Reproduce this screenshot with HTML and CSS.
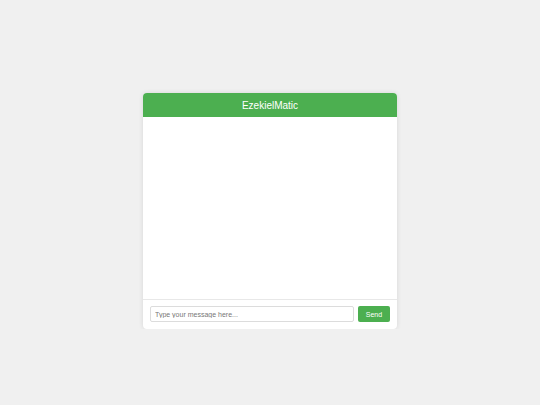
FILE: index.html
```html
<!DOCTYPE html>
<html lang="en">
<head>
<meta charset="utf-8">
<title>EzekielMatic</title>
<link rel="stylesheet" href="styles.css">
</head>
<body>
<div class="chat">
  <div class="chat-header">EzekielMatic</div>
  <div class="chat-body"></div>
  <div class="chat-footer">
    <input class="chat-input" type="text" placeholder="Type your message here...">
    <button class="chat-send">Send</button>
  </div>
</div>
</body>
</html>
```
FILE: styles.css
```css
html, body {
  margin: 0;
  padding: 0;
  background: #f0f0f0;
  font-family: "Liberation Sans", Arial, sans-serif;
}
body {
  display: flex;
  justify-content: center;
  padding-top: 93px;
}
.chat {
  width: 254px;
  height: 236px;
  background: #fff;
  border-radius: 4px;
  box-shadow: 0 0 5px rgba(0,0,0,0.1);
  display: flex;
  flex-direction: column;
  overflow: hidden;
}
.chat-header {
  height: 24px;
  flex: none;
  background: #4caf50;
  color: #fff;
  font-size: 10px;
  display: flex;
  align-items: center;
  justify-content: center;
}
.chat-body {
  flex: 1;
}
.chat-footer {
  flex: none;
  border-top: 1px solid #e8e8e8;
  padding: 6px 7px 7px;
  display: flex;
  gap: 4px;
}
.chat-input {
  flex: 1;
  height: 16px;
  box-sizing: border-box;
  border: 1px solid #dcdcdc;
  border-radius: 2px;
  padding: 0 4px;
  font-family: inherit;
  font-size: 7px;
  margin: 0;
  outline: none;
}
.chat-input::placeholder {
  color: #777;
}
.chat-send {
  width: 32px;
  height: 16px;
  box-sizing: border-box;
  border: none;
  border-radius: 2px;
  background: #4caf50;
  color: #fff;
  font-family: inherit;
  font-size: 7px;
  padding: 0;
  margin: 0;
}
```
